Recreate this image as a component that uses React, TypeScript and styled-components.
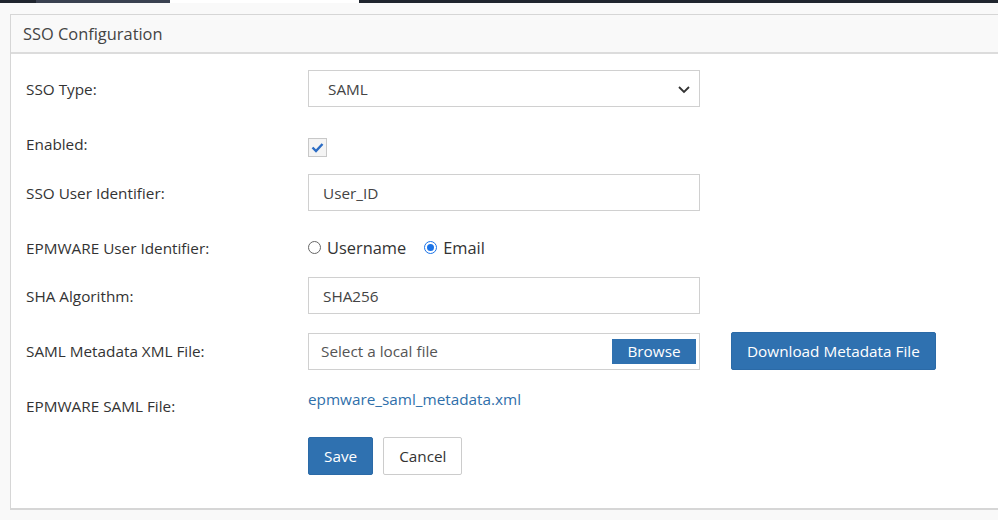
import styled, { createGlobalStyle } from 'styled-components';

const GlobalStyle = createGlobalStyle`
  html, body {
    margin: 0;
    padding: 0;
    background: #f9f9f9;
    font-family: "Open Sans", "Liberation Sans", sans-serif;
    color: #333;
  }
  * { box-sizing: border-box; }
`;

const TopBar = styled.div`
  display: flex;
  height: 3px;
  background: #1f252e;
`;

const TopTab = styled.div<{ $w: number; $bg: string }>`
  width: ${(p) => p.$w}px;
  background: ${(p) => p.$bg};
`;

const Page = styled.div`
  padding: 11px 0 9px 10px;
`;

const Panel = styled.section`
  border: 1px solid #d6d6d6;
  border-right: none;
  border-bottom-width: 2px;
  background: #fff;
`;

const PanelHeader = styled.div`
  height: 39px;
  display: flex;
  align-items: center;
  padding-left: 12px;
  background: #f9f9f9;
  border-bottom: 2px solid #dcdcdc;
  font-size: 16.4px;
  color: #444;
`;

const PanelBody = styled.div`
  padding: 16px 0 34px 15px;
  display: flex;
  flex-direction: column;
`;

const Row = styled.div<{ $h: number; $top?: number }>`
  display: grid;
  grid-template-columns: 282px 392px auto;
  align-items: center;
  height: ${(p) => p.$h}px;
  padding-top: ${(p) => p.$top ?? 0}px;
`;

const Label = styled.div<{ $shift?: number }>`
  font-size: 15.3px;
  color: #333;
  transform: translateY(${(p) => p.$shift ?? 0}px);
`;

const Field = styled.div`
  height: 37px;
  border: 1px solid #d0d0d0;
  background: #fff;
  display: flex;
  align-items: center;
  padding: 0 14px;
  font-size: 15.3px;
  color: #444;
`;

const SelectField = styled(Field)`
  justify-content: space-between;
  padding: 0 8px 0 19px;
`;

const FileField = styled(Field)`
  justify-content: space-between;
  padding: 0 3px 0 12px;
  color: #555;
`;

const Check = styled.div`
  width: 19px;
  height: 19px;
  border: 1px solid #c8c8c8;
  background: #f4f4f4;
  display: flex;
  align-items: center;
  justify-content: center;
`;

const RadioGroup = styled.div`
  display: flex;
  align-items: center;
  gap: 18px;
  font-size: 16.4px;
  color: #333;
`;

const RadioItem = styled.label`
  display: flex;
  align-items: center;
  gap: 6px;
`;

const RadioDot = styled.span<{ $on?: boolean }>`
  width: 13px;
  height: 13px;
  border-radius: 50%;
  border: 1px solid ${(p) => (p.$on ? '#1a73e8' : '#666')};
  display: flex;
  align-items: center;
  justify-content: center;
  &::after {
    content: '';
    width: 7px;
    height: 7px;
    border-radius: 50%;
    background: ${(p) => (p.$on ? '#1a73e8' : 'transparent')};
  }
`;

const Button = styled.button<{ $primary?: boolean }>`
  font-family: "Open Sans", "Liberation Sans", sans-serif;
  font-size: 15.3px;
  height: 38px;
  padding: 0 15px;
  border-radius: 2px;
  border: 1px solid ${(p) => (p.$primary ? '#2b6aa7' : '#ccc')};
  background: ${(p) => (p.$primary ? '#2f71b0' : '#fff')};
  color: ${(p) => (p.$primary ? '#fff' : '#333')};
  cursor: pointer;
`;

const BrowseButton = styled.span`
  background: #2f71b0;
  color: #fff;
  font-size: 15.3px;
  height: 25px;
  width: 84px;
  display: flex;
  align-items: center;
  justify-content: center;
`;

const DownloadCell = styled.div`
  padding-left: 31px;
`;

const FileLink = styled.a`
  color: #2f6faa;
  font-size: 15.3px;
  text-decoration: none;
  transform: translateY(-7px);
`;

const Actions = styled.div`
  grid-column: 2;
  display: flex;
  gap: 10px;
`;

export default function App() {
  return (
    <>
      <GlobalStyle />
      <TopBar>
        <TopTab $w={36} $bg="#1f252e" />
        <TopTab $w={134} $bg="#3a4150" />
        <TopTab $w={189} $bg="#ffffff" />
      </TopBar>
      <Page>
        <Panel>
          <PanelHeader>SSO Configuration</PanelHeader>
          <PanelBody>
            <Row $h={37}>
              <Label>SSO Type:</Label>
              <SelectField>
                <span>SAML</span>
                <svg width="14" height="14" viewBox="0 0 14 14">
                  <path d="M2 5l5 5 5-5" fill="none" stroke="#333" strokeWidth="1.8" />
                </svg>
              </SelectField>
            </Row>
            <Row $h={67} $top={13}>
              <Label $shift={-3}>Enabled:</Label>
              <Check>
                <svg width="13" height="11" viewBox="0 0 13 11">
                  <path d="M1.5 5.5l3.5 3.5 6.5-7" fill="none" stroke="#2b6cc4" strokeWidth="2.4" />
                </svg>
              </Check>
            </Row>
            <Row $h={37}>
              <Label>SSO User Identifier:</Label>
              <Field>User_ID</Field>
            </Row>
            <Row $h={66} $top={7}>
              <Label>EPMWARE User Identifier:</Label>
              <RadioGroup>
                <RadioItem>
                  <RadioDot />
                  Username
                </RadioItem>
                <RadioItem>
                  <RadioDot $on />
                  Email
                </RadioItem>
              </RadioGroup>
            </Row>
            <Row $h={37}>
              <Label>SHA Algorithm:</Label>
              <Field>SHA256</Field>
            </Row>
            <Row $h={74}>
              <Label>SAML Metadata XML File:</Label>
              <FileField>
                <span>Select a local file</span>
                <BrowseButton>Browse</BrowseButton>
              </FileField>
              <DownloadCell>
                <Button $primary>Download Metadata File</Button>
              </DownloadCell>
            </Row>
            <Row $h={36}>
              <Label>EPMWARE SAML File:</Label>
              <FileLink href="#">epmware_saml_metadata.xml</FileLink>
            </Row>
            <Row $h={50} $top={13}>
              <Actions>
                <Button $primary>Save</Button>
                <Button>Cancel</Button>
              </Actions>
            </Row>
          </PanelBody>
        </Panel>
      </Page>
    </>
  );
}
